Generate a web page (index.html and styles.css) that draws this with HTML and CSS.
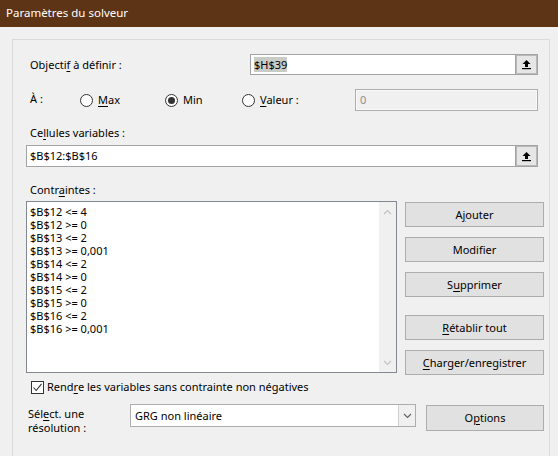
FILE: index.html
```html
<!DOCTYPE html>
<html lang="fr">
<head>
<meta charset="utf-8">
<title>Paramètres du solveur</title>
<link rel="stylesheet" href="styles.css">
</head>
<body>
<div class="window">
  <div class="titlebar">Paramètres du solveur</div>
  <div class="panel">
    <div class="row row-obj">
      <div class="label lbl-obj">Objecti<u>f</u> à définir :</div>
      <div class="refbox obj-box">
        <span class="reftext"><span class="sel">$H$39</span></span>
        <span class="refbtn"><svg width="11" height="11" viewBox="0 0 11 11"><path d="M5.5 1 L1.5 5 H4 V8 H7 V5 H9.5 Z" fill="#000"/><rect x="1" y="9" width="9" height="1.2" fill="#000"/></svg></span>
      </div>
    </div>

    <div class="row row-to">
      <div class="label lbl-to">À :</div>
      <label class="radio r-max"><span class="circle"></span><span><u>M</u>ax</span></label>
      <label class="radio r-min"><span class="circle on"></span><span>Min</span></label>
      <label class="radio r-val"><span class="circle"></span><span><u>V</u>aleur :</span></label>
      <div class="valbox">0</div>
    </div>

    <div class="label lbl-cells">Ce<u>l</u>lules variables :</div>
    <div class="refbox cells-box">
      <span class="reftext">$B$12:$B$16</span>
      <span class="refbtn"><svg width="11" height="11" viewBox="0 0 11 11"><path d="M5.5 1 L1.5 5 H4 V8 H7 V5 H9.5 Z" fill="#000"/><rect x="1" y="9" width="9" height="1.2" fill="#000"/></svg></span>
    </div>

    <div class="label lbl-cons">Contr<u>a</u>intes :</div>
    <div class="row row-cons">
      <div class="listbox">
        <ul class="items">
          <li>$B$12 &lt;= 4</li>
          <li>$B$12 &gt;= 0</li>
          <li>$B$13 &lt;= 2</li>
          <li>$B$13 &gt;= 0,001</li>
          <li>$B$14 &lt;= 2</li>
          <li>$B$14 &gt;= 0</li>
          <li>$B$15 &lt;= 2</li>
          <li>$B$15 &gt;= 0</li>
          <li>$B$16 &lt;= 2</li>
          <li>$B$16 &gt;= 0,001</li>
        </ul>
        <div class="scrollbar">
          <svg width="9" height="6" viewBox="0 0 9 6"><path d="M1 5 L4.5 1.5 L8 5" fill="none" stroke="#c2c2c2" stroke-width="1.2"/></svg>
          <svg width="9" height="6" viewBox="0 0 9 6"><path d="M1 1 L4.5 4.5 L8 1" fill="none" stroke="#c2c2c2" stroke-width="1.2"/></svg>
        </div>
      </div>
      <div class="btncol">
        <button class="btn b-add">A<u>j</u>outer</button>
        <button class="btn b-mod">Modifier</button>
        <button class="btn b-del">S<u>u</u>pprimer</button>
        <button class="btn b-reset"><u>R</u>établir tout</button>
        <button class="btn b-load"><u>C</u>harger/enregistrer</button>
      </div>
    </div>

    <label class="check">
      <span class="box"><svg width="11" height="11" viewBox="0 0 11 11"><path d="M1.5 5.5 L4.2 8.5 L9.5 1.8" fill="none" stroke="#333" stroke-width="1.1"/></svg></span>
      <span>Rend<u>r</u>e les variables sans contrainte non négatives</span>
    </label>

    <div class="row row-method">
      <div class="label lbl-method">Sél<u>e</u>ct. une<br>résolution :</div>
      <div class="combo">
        <span class="combotext">GRG non linéaire</span>
        <span class="comboarrow"><svg width="9" height="6" viewBox="0 0 9 6"><path d="M1 1 L4.5 4.5 L8 1" fill="none" stroke="#606060" stroke-width="1.1"/></svg></span>
      </div>
      <button class="btn b-opt">O<u>p</u>tions</button>
    </div>

    <div class="subpanel"></div>
  </div>
</div>
</body>
</html>
```

FILE: styles.css
```css
* { box-sizing: border-box; }
html, body { margin: 0; padding: 0; }
body {
  width: 558px;
  height: 456px;
  overflow: hidden;
  background: #f0f0f0;
  font-family: "Noto Sans", sans-serif;
  font-size: 11px;
  color: #000;
}
u { text-decoration-thickness: 1px; text-underline-offset: 2px; }

.window { width: 558px; height: 456px; overflow: hidden; }

.titlebar {
  height: 27px;
  background: #5e3416;
  color: #fff;
  padding-left: 6px;
  line-height: 26px;
  font-size: 11.5px;
}

.panel {
  margin: 12px 0 0 12px;
  width: 538px;
  height: 417px;
  border: 1px solid #dadada;
  border-bottom: none;
  padding-left: 13px;
  padding-right: 0;
  overflow: hidden;
}

.row { display: flex; align-items: center; }
.label { line-height: 16px; padding-left: 4px; white-space: nowrap; }

/* Objectif */
.row-obj { margin-top: 14px; height: 21px; }
.lbl-obj { width: 224px; flex-shrink: 0; }
.refbox {
  display: flex;
  height: 21px;
  border: 1px solid #a3a3a3;
  background: #fff;
  flex-shrink: 0;
}
.obj-box { width: 288px; }
.reftext { flex: 1; padding-left: 3px; line-height: 19px; white-space: nowrap; }
.sel { background: #c9cbc6; }
.refbtn {
  width: 22px;
  height: 19px;
  background: #e6e6e6;
  border-left: 1px solid #a3a3a3;
  box-shadow: inset 0 0 0 1px #b9b9b9;
  display: flex;
  align-items: center;
  justify-content: center;
}

/* À : */
.row-to { margin-top: 14px; height: 22px; }
.lbl-to { width: 54px; flex-shrink: 0; align-self: flex-start; padding-top: 2px; }
.radio { display: flex; align-items: center; gap: 5px; line-height: 16px; flex-shrink: 0; }
.circle {
  width: 13px; height: 13px;
  border: 1px solid #333;
  border-radius: 50%;
  background: #fff;
  position: relative;
}
.circle.on::after {
  content: "";
  position: absolute;
  left: 2px; top: 2px;
  width: 7px; height: 7px;
  border-radius: 50%;
  background: #333;
}
.r-max { width: 85px; }
.r-min { width: 77px; }
.r-val { width: 113px; }
.valbox {
  width: 183px;
  flex-shrink: 0;
  height: 22px;
  border: 1px solid #adadad;
  background: #f0f0f0;
  box-shadow: inset 0 0 0 1px #fafafa;
  color: #8d8d8d;
  padding-left: 4px;
  line-height: 20px;
}

/* Cellules */
.lbl-cells { margin-top: 14px; }
.cells-box { margin-top: 4px; width: 512px; height: 22px; }
.cells-box .reftext { line-height: 20px; }
.cells-box .refbtn { height: 20px; }

/* Contraintes */
.lbl-cons { margin-top: 15px; }
.row-cons { margin-top: 3px; align-items: flex-start; }
.listbox {
  width: 371px;
  flex-shrink: 0;
  height: 172px;
  border: 1px solid #828790;
  background: #fff;
  display: flex;
}
.items {
  list-style: none;
  margin: 0;
  padding: 3px 0 0 3px;
  flex: 1;
  line-height: 13px;
}
.scrollbar {
  width: 17px;
  background: #f0f0f0;
  display: flex;
  flex-direction: column;
  justify-content: space-between;
  align-items: center;
  padding: 7px 0 6px;
}
.btncol {
  margin-left: 8px;
  margin-top: 1px;
  display: flex;
  flex-direction: column;
  width: 139px;
  flex-shrink: 0;
}
.btn {
  font-family: inherit;
  font-size: 11px;
  color: #000;
  background: #e1e1e1;
  border: 1px solid #adadad;
  height: 25px;
  padding: 0;
  line-height: 16px;
}
.b-mod, .b-del, .b-load { margin-top: 10px; }
.b-reset { margin-top: 18px; }

/* Checkbox */
.check {
  margin-top: 4px;
  margin-left: 5px;
  display: flex;
  align-items: center;
  gap: 3px;
  line-height: 16px;
}
.box {
  width: 13px; height: 13px;
  border: 1px solid #333;
  background: #fff;
  display: flex;
  align-items: center;
  justify-content: center;
}

/* Method */
.row-method { margin-top: 9px; align-items: flex-start; }
.lbl-method { width: 104px; flex-shrink: 0; line-height: 14px; padding-left: 2px; padding-top: 3px; }
.combo {
  width: 286px;
  flex-shrink: 0;
  height: 23px;
  border: 1px solid #adadad;
  background: #fff;
  display: flex;
}
.combotext { flex: 1; padding-left: 4px; line-height: 21px; }
.comboarrow {
  width: 17px;
  background: #f0f0f0;
  border-left: 1px solid #cfcfcf;
  display: flex;
  align-items: center;
  justify-content: center;
}
.b-opt { margin-left: 10px; margin-top: 1px; width: 118px; height: 26px; flex-shrink: 0; }

.subpanel {
  margin-top: 21px;
  width: 511px;
  height: 20px;
  border: 1px solid #dcdcdc;
}
```
